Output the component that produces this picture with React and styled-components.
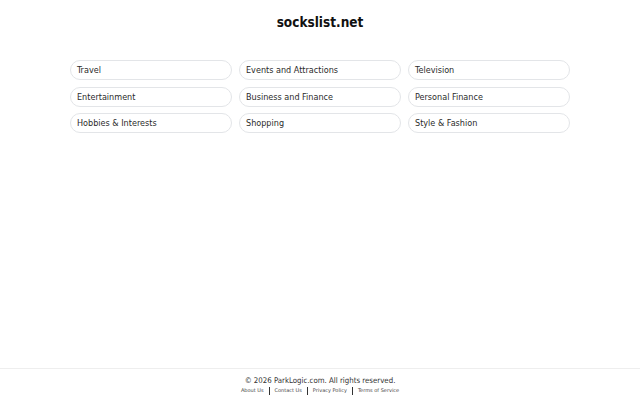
import { Fragment } from "react";
import styled, { createGlobalStyle } from "styled-components";

const Global = createGlobalStyle`
  html, body { margin: 0; padding: 0; background: #ffffff; }
  body { font-family: "DejaVu Sans Condensed", "DejaVu Sans", sans-serif; color: #1f2937; }
`;

const Page = styled.div`
  min-height: 100vh;
  display: flex;
  flex-direction: column;
`;

const Header = styled.header`
  padding-top: 14px;
  text-align: center;
`;

const Title = styled.h1`
  margin: 0;
  font-size: 13.5px;
  line-height: 16px;
  font-weight: 700;
  color: #111111;
`;

const Grid = styled.div`
  width: 500px;
  margin: 30px auto 0;
  display: grid;
  grid-template-columns: repeat(3, 1fr);
  column-gap: 7px;
  row-gap: 6.5px;
`;

const Pill = styled.a`
  display: flex;
  align-items: center;
  height: 20px;
  box-sizing: border-box;
  padding: 0 6px;
  border: 1px solid #e3e5e8;
  border-radius: 999px;
  font-size: 9px;
  color: #2b2b2b;
  text-decoration: none;
`;

const Footer = styled.footer`
  margin-top: auto;
  height: 32px;
  box-sizing: border-box;
  border-top: 1px solid #eeeeee;
  padding-top: 7px;
  text-align: center;
`;

const Copy = styled.div`
  font-size: 7.8px;
  line-height: 10px;
  color: #333333;
`;

const Links = styled.div`
  display: flex;
  justify-content: center;
  align-items: center;
  gap: 5px;
  height: 9px;
  font-family: "DejaVu Sans", sans-serif;
  font-size: 5px;
  color: #444444;
`;

const LinkItem = styled.a`
  color: inherit;
  text-decoration: none;
  line-height: 9px;
`;

const Sep = styled.span`
  width: 1px;
  height: 8px;
  background: #333333;
`;

const topics = [
  "Travel",
  "Events and Attractions",
  "Television",
  "Entertainment",
  "Business and Finance",
  "Personal Finance",
  "Hobbies & Interests",
  "Shopping",
  "Style & Fashion",
];

const links = ["About Us", "Contact Us", "Privacy Policy", "Terms of Service"];

export default function App() {
  return (
    <Page>
      <Global />
      <Header>
        <Title>sockslist.net</Title>
      </Header>
      <Grid>
        {topics.map((t) => (
          <Pill key={t} href="#">
            {t}
          </Pill>
        ))}
      </Grid>
      <Footer>
        <Copy>© 2026 ParkLogic.com. All rights reserved.</Copy>
        <Links>
          {links.map((l, i) => (
            <Fragment key={l}>
              {i > 0 && <Sep />}
              <LinkItem href="#">{l}</LinkItem>
            </Fragment>
          ))}
        </Links>
      </Footer>
    </Page>
  );
}
